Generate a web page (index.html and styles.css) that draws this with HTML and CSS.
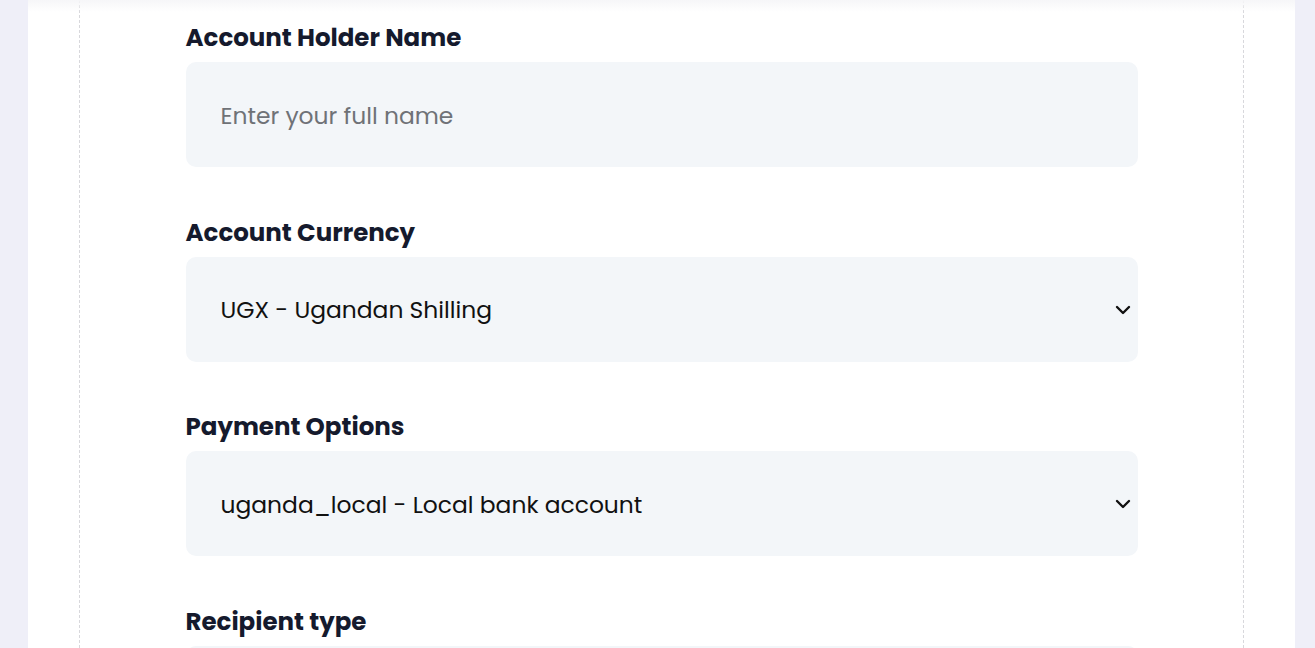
FILE: index.html
```html
<!DOCTYPE html>
<html>
<head>
<meta charset="utf-8">
<link rel="stylesheet" href="styles.css">
</head>
<body>
<div class="card">
  <div class="dashed">
    <form class="form">
      <div class="group">
        <label class="label">Account Holder Name</label>
        <div class="field"><span class="placeholder">Enter your full name</span></div>
      </div>
      <div class="group">
        <label class="label">Account Currency</label>
        <div class="field select"><span class="value">UGX - Ugandan Shilling</span>
          <svg class="chev" width="16" height="10" viewBox="0 0 16 10"><path d="M2 2 L8 8 L14 2" fill="none" stroke="#111" stroke-width="2.4" stroke-linecap="round" stroke-linejoin="round"/></svg>
        </div>
      </div>
      <div class="group">
        <label class="label">Payment Options</label>
        <div class="field select"><span class="value">uganda_local - Local bank account</span>
          <svg class="chev" width="16" height="10" viewBox="0 0 16 10"><path d="M2 2 L8 8 L14 2" fill="none" stroke="#111" stroke-width="2.4" stroke-linecap="round" stroke-linejoin="round"/></svg>
        </div>
      </div>
      <div class="group">
        <label class="label">Recipient type</label>
        <div class="field"></div>
      </div>
    </form>
  </div>
</div>
</body>
</html>
```
FILE: styles.css
```css
html, body {
  margin: 0;
  padding: 0;
  height: 100%;
  overflow: hidden;
}
body {
  background: #efeff8;
  font-family: "Poppins", "Inter", "Noto Sans", sans-serif;
}
.card {
  margin: 0 20px 0 28px;
  background: #ffffff;
  padding: 0 51px;
  height: 100%;
  position: relative;
}
.card::before {
  content: "";
  position: absolute;
  left: 0;
  right: 0;
  top: 0;
  height: 12px;
  background: linear-gradient(#f6f6f8, rgba(255,255,255,0));
}
.dashed {
  border-left: 1px dashed #d8d8dc;
  border-right: 1px dashed #d8d8dc;
  height: 100%;
}
.form {
  max-width: 952px;
  margin: 0 auto;
  padding-top: 21px;
}
.group {
  margin-bottom: 48.5px;
}
.label {
  display: block;
  font-size: 24.5px;
  line-height: 33px;
  font-weight: 700;
  color: #151a2d;
  margin-bottom: 8px;
}
.field {
  height: 105px;
  background: #f3f6f9;
  border-radius: 10px;
  display: flex;
  align-items: center;
  padding: 1px 35px 0;
  box-sizing: border-box;
  font-size: 23.4px;
}
.placeholder {
  color: #6f7277;
  padding-top: 1px;
}
.value {
  color: #111111;
  flex: 1;
}
.select {
  padding-right: 7px;
}
.chev {
  display: block;
}
```
